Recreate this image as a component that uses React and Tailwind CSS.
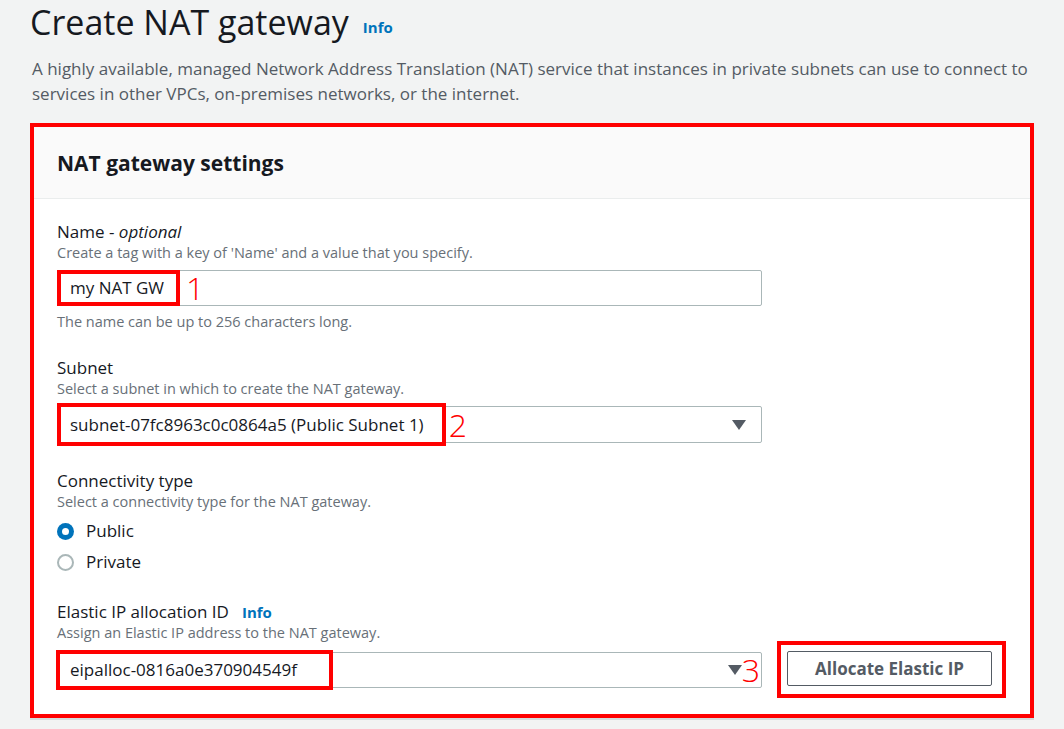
import { useState } from "react";

function Caret() {
  return (
    <svg width="14" height="10" viewBox="0 0 14 10" className="shrink-0">
      <path d="M0 0 H14 L7 10 Z" fill="#545b64" />
    </svg>
  );
}

function Field({ label, desc, children, hint }) {
  return (
    <div className="flex flex-col">
      <div className="text-[17px] leading-[22px] text-[#16191f]">{label}</div>
      <div className="text-[14.5px] leading-[20px] text-[#687078]">{desc}</div>
      {children}
      {hint && <div className="mt-[6px] text-[14.5px] leading-[20px] text-[#687078]">{hint}</div>}
    </div>
  );
}

export default function App() {
  const [type, setType] = useState("public");

  return (
    <div className="min-h-[729px] bg-[#f2f3f3] px-[30px] font-['Open_Sans','Noto_Sans',sans-serif] text-[#16191f]">
      <h1 className="h-[44px] flex items-center gap-[14px] text-[34px] leading-[44px] font-normal">
        Create NAT gateway
        <span className="mt-[10px] text-[15px] leading-none font-bold text-[#0073bb]">Info</span>
      </h1>
      <p className="mt-[12px] text-[17px] leading-[25px] text-[#545b64] pl-[2px]">
        A highly available, managed Network Address Translation (NAT) service that instances in private subnets can use to connect to services in other VPCs, on-premises networks, or the internet.
      </p>

      <div className="mt-[17px] border-4 border-[#ff0000] bg-white shadow-[0_2px_0_#d5dbdb]">
        <div className="h-[72px] flex items-center px-[23px] bg-[#fafafa] border-b border-[#eaeded]">
          <h2 className="text-[21px] leading-[28px] font-bold">NAT gateway settings</h2>
        </div>

        <div className="px-[23px] pt-[22px] pb-[16px] flex flex-col">
          <Field
            label={<>Name - <i>optional</i></>}
            desc="Create a tag with a key of 'Name' and a value that you specify."
            hint="The name can be up to 256 characters long."
          >
            <div className="mt-[7px] w-[705px] h-[36px] border border-[#aab7b8] rounded-[2px] bg-white flex items-stretch">
              <span className="-ml-px -my-px border-4 border-[#ff0000] flex items-center pl-[9px] pr-[12px] text-[17px]">my NAT GW</span>
              <span className="ml-[6px] self-center text-[32px] leading-[32px] font-light text-[#ff0000]">1</span>
            </div>
          </Field>

          <div className="mt-[25px]">
            <Field label="Subnet" desc="Select a subnet in which to create the NAT gateway.">
              <div className="mt-[7px] w-[705px] h-[37px] border border-[#aab7b8] rounded-[2px] bg-white flex items-stretch pr-[15px]">
                <span className="-ml-px -mt-[4px] -mb-[4px] border-4 border-[#ff0000] flex items-center pl-[9px] pr-[18px] text-[17px]">
                  subnet-07fc8963c0c0864a5 (Public Subnet 1)
                </span>
                <span className="ml-[3px] self-center text-[32px] leading-[32px] font-light text-[#ff0000]">2</span>
                <span className="flex-1" />
                <span className="self-center"><Caret /></span>
              </div>
            </Field>
          </div>

          <div className="mt-[27px]">
            <Field label="Connectivity type" desc="Select a connectivity type for the NAT gateway.">
              <div className="mt-[8px] flex flex-col gap-[9px]">
                {[
                  ["public", "Public"],
                  ["private", "Private"],
                ].map(([v, l]) => (
                  <label key={v} className="flex items-center gap-[12px] h-[22px] text-[17px] cursor-pointer" onClick={() => setType(v)}>
                    {type === v ? (
                      <span className="w-[17px] h-[17px] rounded-full bg-[#0073bb] flex items-center justify-center">
                        <span className="w-[7px] h-[7px] rounded-full bg-white" />
                      </span>
                    ) : (
                      <span className="w-[17px] h-[17px] rounded-full border-2 border-[#aab7b8] bg-white" />
                    )}
                    {l}
                  </label>
                ))}
              </div>
            </Field>
          </div>

          <div className="mt-[28px]">
            <Field
              label={<span className="flex items-baseline gap-[13px]">Elastic IP allocation ID<span className="text-[15px] leading-none font-bold text-[#0073bb]">Info</span></span>}
              desc="Assign an Elastic IP address to the NAT gateway."
            >
              <div className="-mt-[2px] flex items-center gap-[15px]">
                <div className="w-[705px] h-[36px] border border-[#aab7b8] rounded-[2px] bg-white flex items-stretch pr-[1px]">
                  <span className="-ml-[2px] -my-[3px] border-4 border-[#ff0000] flex items-center pl-[10px] pr-[32px] text-[17px]">
                    eipalloc-0816a0e370904549f
                  </span>
                  <span className="flex-1" />
                  <span className="self-center"><Caret /></span>
                  <span className="self-center text-[32px] leading-[32px] font-light text-[#ff0000]">3</span>
                </div>
                <div className="border-4 border-[#ff0000] pt-[6px] pl-[6px] pr-[10px] pb-[8px]">
                  <button className="w-[205px] h-[35px] border border-[#545b64] rounded-[2px] bg-white text-[17px] font-bold text-[#545b64]">
                    Allocate Elastic IP
                  </button>
                </div>
              </div>
            </Field>
          </div>
        </div>
      </div>
    </div>
  );
}
